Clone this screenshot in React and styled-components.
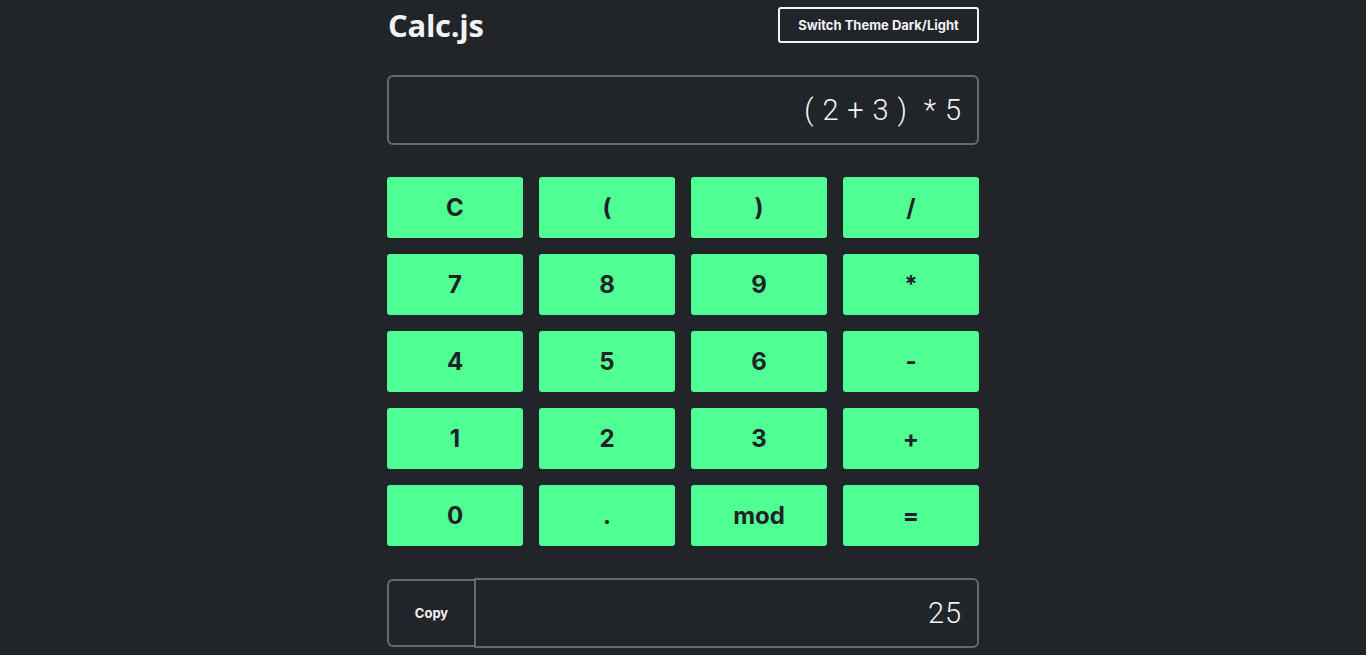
import styled, { createGlobalStyle } from "styled-components";

const GlobalStyle = createGlobalStyle`
  body {
    margin: 0;
    background: #212429;
    font-family: Inter, "Liberation Sans", sans-serif;
  }
`;

const Page = styled.div`
  width: 592px;
  margin: 0 auto;
  padding-top: 7px;
  display: flex;
  flex-direction: column;
`;

const Header = styled.header`
  display: flex;
  align-items: center;
  justify-content: space-between;
  height: 36px;
`;

const Title = styled.h1`
  margin: 0 0 0 1px;
  font-family: "Open Sans", "Noto Sans", sans-serif;
  font-size: 31px;
  font-weight: 700;
  color: #f2f2f2;
  letter-spacing: -0.3px;
`;

const ThemeButton = styled.button`
  height: 36px;
  width: 201px;
  background: transparent;
  border: 2px solid #f2f2f2;
  border-radius: 3px;
  color: #f2f2f2;
  font-family: Inter, sans-serif;
  font-size: 13px;
  font-weight: 700;
  cursor: pointer;
`;

const Display = styled.div`
  margin-top: 32px;
  height: 70px;
  box-sizing: border-box;
  border: 2px solid #68696b;
  border-radius: 6px;
  display: flex;
  align-items: center;
  justify-content: flex-end;
  padding: 0 15px 0 17px;
  font-family: Roboto, sans-serif;
  font-weight: 300;
  font-size: 29px;
  letter-spacing: 0.9px;
  color: #f4f4f4;
  white-space: pre;
`;

const Keypad = styled.div`
  margin-top: 32px;
  display: grid;
  grid-template-columns: repeat(4, 136px);
  grid-auto-rows: 61px;
  gap: 16px;
`;

const Key = styled.button`
  background: #4fff93;
  border: none;
  border-radius: 3px;
  color: #1f2328;
  font-family: Inter, sans-serif;
  font-weight: 700;
  font-size: 24px;
  cursor: pointer;
`;

const Footer = styled.div`
  margin-top: 32px;
  display: flex;
  align-items: center;
  height: 70px;
`;

const CopyButton = styled.button`
  width: 87px;
  height: 68px;
  background: transparent;
  border: 2px solid #68696b;
  border-right: none;
  border-radius: 6px 0 0 6px;
  color: #f2f2f2;
  font-family: Inter, sans-serif;
  font-size: 13px;
  font-weight: 700;
`;

const Result = styled.div`
  flex: 1;
  align-self: stretch;
  box-sizing: border-box;
  border: 2px solid #68696b;
  border-radius: 0 6px 6px 0;
  display: flex;
  align-items: center;
  justify-content: flex-end;
  padding: 0 15px 0 17px;
  font-family: Roboto, sans-serif;
  font-weight: 300;
  font-size: 29px;
  letter-spacing: 0.9px;
  color: #f4f4f4;
`;

const keys = ["C", "(", ")", "/", "7", "8", "9", "*", "4", "5", "6", "-", "1", "2", "3", "+", "0", ".", "mod", "="];

export default function App() {
  return (
    <>
      <GlobalStyle />
      <Page>
        <Header>
          <Title>Calc.js</Title>
          <ThemeButton>Switch Theme Dark/Light</ThemeButton>
        </Header>
        <Display>{"( 2 + 3 )  * 5"}</Display>
        <Keypad>
          {keys.map((k) => (
            <Key key={k}>{k}</Key>
          ))}
        </Keypad>
        <Footer>
          <CopyButton>Copy</CopyButton>
          <Result>25</Result>
        </Footer>
      </Page>
    </>
  );
}
